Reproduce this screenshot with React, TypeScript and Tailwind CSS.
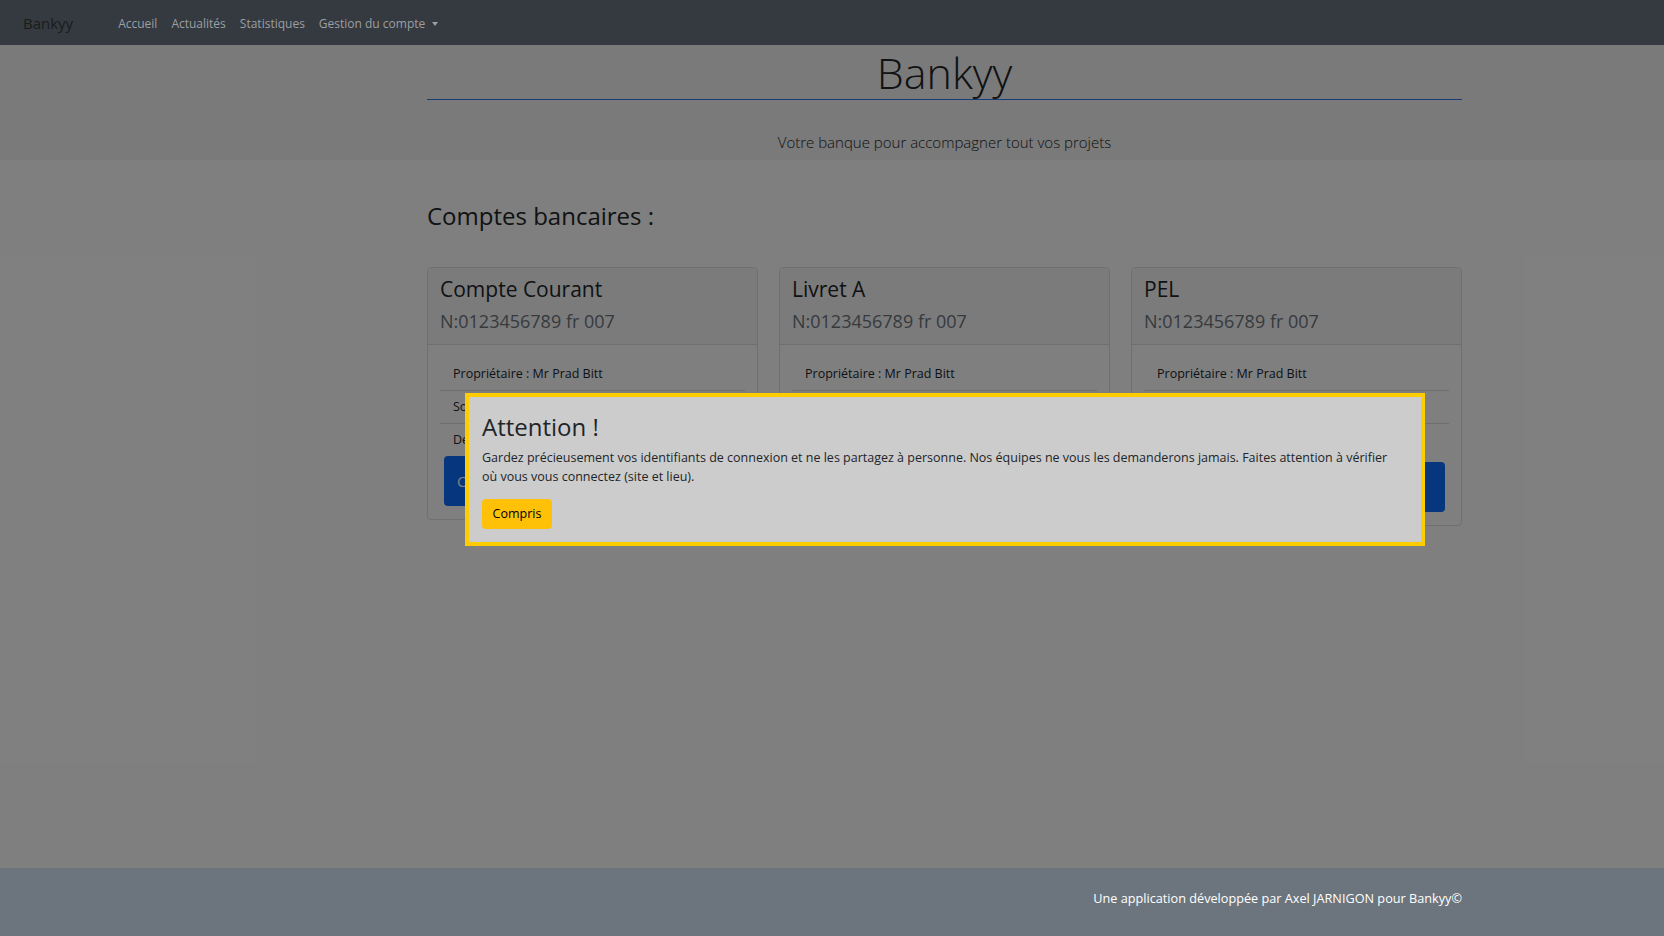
import React from 'react';

interface Account {
  name: string;
  number: string;
  rows: string[];
  tallLast?: boolean;
}

const accounts: Account[] = [
  {
    name: 'Compte Courant',
    number: 'N:0123456789 fr 007',
    rows: ['Propriétaire : Mr Prad Bitt', 'Solde : 2 450,00 €', 'Découvert autorisé : 300 €'],
  },
  {
    name: 'Livret A',
    number: 'N:0123456789 fr 007',
    rows: ['Propriétaire : Mr Prad Bitt', 'Solde : 12 000,00 €', 'Taux : 3 %'],
  },
  {
    name: 'PEL',
    number: 'N:0123456789 fr 007',
    rows: ['Propriétaire : Mr Prad Bitt', 'Solde : 8 200,00 €', 'Taux : 2,25 %'],
    tallLast: true,
  },
];

function Navbar() {
  return (
    <nav className="flex h-[45px] shrink-0 items-center bg-[#343a40] pt-[2px] pl-[23px]">
      <span className="text-[15px] text-[#1b1b1b]">Bankyy</span>
      <ul className="ml-[45px] flex items-center gap-[14px] text-[12px] text-[#9c9fa3]">
        <li>Accueil</li>
        <li>Actualités</li>
        <li>Statistiques</li>
        <li className="flex items-center">
          Gestion du compte
          <span className="ml-[7px] mt-[1px] h-0 w-0 border-x-[3.5px] border-t-[4px] border-x-transparent border-t-[#9c9fa3]" />
        </li>
      </ul>
    </nav>
  );
}

function AccountCard({ account }: { account: Account }) {
  return (
    <div className="flex flex-col rounded-[4px] border border-[#dfdfdf] bg-white">
      <div className="rounded-t-[4px] border-b border-[#dfdfdf] bg-[#f7f7f7] px-[12px] pt-[9px] pb-[12px]">
        <h5 className="text-[21px] leading-[25px] text-[#212529]">{account.name}</h5>
        <h6 className="mt-[8px] text-[18px] leading-[22px] text-[#6c757d]">{account.number}</h6>
      </div>
      <div className="px-[12px] pt-[13px] pb-[13px]">
        <ul>
          {account.rows.map((row, i) => {
            const last = i === account.rows.length - 1;
            return (
              <li
                key={row}
                className={
                  last
                    ? account.tallLast
                      ? 'px-[13px] pt-[7px] pb-[13px] text-[12.5px] leading-[18px] text-[#212529]'
                      : 'px-[13px] py-[7px] text-[12.5px] leading-[18px] text-[#212529]'
                    : 'border-b border-[#dddddd] px-[13px] py-[7px] text-[12.5px] leading-[18px] text-[#212529]'
                }
              >
                {row}
              </li>
            );
          })}
        </ul>
        <button className="mx-[4px] h-[50px] w-[calc(100%-8px)] rounded-[4px] bg-[#0d6efd] px-[13px] text-left text-[15px] text-white">
          Consulter le compte
        </button>
      </div>
    </div>
  );
}

function WarningModal() {
  return (
    <div className="absolute top-[348px] left-[465px] z-20 w-[960px] border-4 border-[#ffcc00] bg-[#cccccc] px-[13px] pt-[17px] pb-[13px] text-[#212529]">
      <h2 className="text-[24px] leading-[26px]">Attention !</h2>
      <p className="mt-[8px] text-[12.5px] leading-[19px]">
        Gardez précieusement vos identifiants de connexion et ne les partagez à personne. Nos équipes ne vous les
        demanderons jamais. Faites attention à vérifier
        <br />
        où vous vous connectez (site et lieu).
      </p>
      <button className="mt-[13px] h-[30px] w-[70px] rounded-[4px] bg-[#ffc107] text-[12.5px] text-black">Compris</button>
    </div>
  );
}

export default function App() {
  return (
    <div className="flex h-screen flex-col bg-white font-['Open_Sans',sans-serif]">
      <Navbar />

      <main className="relative flex-1">
        {/* Jumbotron */}
        <div className="h-[115px] bg-[#f4f4f4]">
          <div className="ml-[427px] w-[1035px] pt-[2px]">
            <h1 className="text-center text-[43px] leading-[52px] font-light text-[#212529]">Bankyy</h1>
            <hr className="border-t border-[#2a78f0]" />
            <p className="mt-[30px] text-center text-[15px] leading-[24px] font-light text-[#212529]">
              Votre banque pour accompagner tout vos projets
            </p>
          </div>
        </div>

        {/* Accounts */}
        <section className="ml-[427px] w-[1035px]">
          <h3 className="mt-[41px] text-[24px] leading-[29px] text-[#212529]">Comptes bancaires :</h3>
          <div className="mt-[37px] grid grid-cols-3 items-start gap-[21px]">
            {accounts.map((a) => (
              <AccountCard key={a.name} account={a} />
            ))}
          </div>
        </section>

        {/* Backdrop */}
        <div className="absolute inset-0 z-10 bg-black/50" />
        <WarningModal />
      </main>

      <footer className="h-[68px] shrink-0 bg-[#6c757d] pt-[20px] pr-[202px] text-right text-[12.7px] leading-[20px] text-white">
        Une application développée par Axel JARNIGON pour Bankyy©
      </footer>
    </div>
  );
}
